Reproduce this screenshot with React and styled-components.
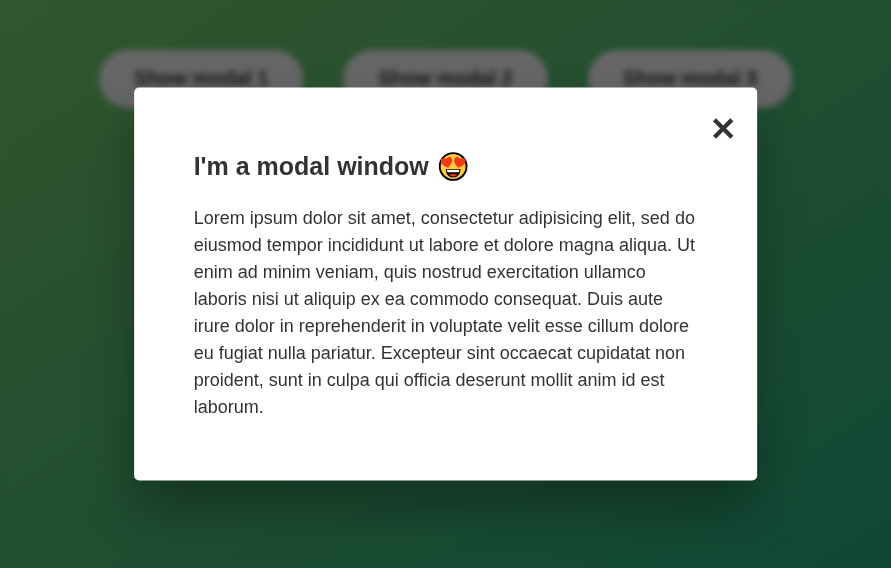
import React from 'react';
import styled, { createGlobalStyle } from 'styled-components';

const GlobalStyle = createGlobalStyle`
  * { margin: 0; padding: 0; box-sizing: border-box; }
  html { font-size: 62.5%; }
  body {
    font-family: "Liberation Sans", Arial, sans-serif;
    color: #333;
    line-height: 1.5;
    overflow: hidden;
  }
`;

const Page = styled.main`
  display: flex;
  justify-content: center;
  align-items: flex-start;
  height: 100vh;
  background: linear-gradient(to top left, #28b487, #7dd56f);
`;

const ShowButton = styled.button`
  font: 600 2rem "Liberation Sans", Arial, sans-serif;
  padding: 1.7rem 3.5rem 1.8rem;
  margin: 5rem 2rem;
  border: none;
  background-color: #fff;
  color: #444;
  border-radius: 10rem;
  white-space: nowrap;
`;

const Overlay = styled.div`
  position: fixed;
  inset: 0;
  background-color: rgba(0, 0, 0, 0.6);
  backdrop-filter: blur(3px);
`;

const Modal = styled.section`
  position: fixed;
  top: 50%;
  left: 50%;
  transform: translate(-50%, -50%);
  width: 70%;
  background-color: #fff;
  padding: 6rem;
  border-radius: 5px;
  box-shadow: 0 3rem 5rem rgba(0, 0, 0, 0.3);
`;

const CloseButton = styled.button`
  position: absolute;
  top: 3rem;
  right: 2.3rem;
  width: 22px;
  height: 22px;
  color: #333;
  border: none;
  background: none;

  svg {
    display: block;
  }
`;

const Title = styled.h1`
  display: flex;
  align-items: center;
  gap: 0.9rem;
  height: 3.7rem;
  font-size: 2.5rem;
  margin-bottom: 2rem;
`;

const TitleText = styled.span`
  padding-top: 1px;
`;

const Text = styled.p`
  font-size: 1.8rem;
`;

const Emoji = styled.svg`
  width: 30px;
  height: 30px;
`;

const HEART = 'M0 5 C-3 2.8 -5.6 .8 -5 -2.2 C-4.5 -4.9 -1.2 -5 0 -2.8 C1.2 -5 4.5 -4.9 5 -2.2 C5.6 .8 3 2.8 0 5Z';

const HeartEyes = () => (
  <Emoji viewBox="0 0 30 30" role="img" aria-label="Heart eyes">
    <circle cx="15" cy="15" r="13.4" fill="#ffc83d" stroke="#000" strokeWidth="1.9" />
    <path d={HEART} transform="translate(8.7 10.8) rotate(-12) scale(1.12)" fill="#f03a17" />
    <path d={HEART} transform="translate(21.3 10.8) rotate(12) scale(1.12)" fill="#f03a17" />
    <path d="M7.7 17.5H22.3C22.3 22.8 19.4 26 15 26S7.7 22.8 7.7 17.5Z" fill="#000" />
    <path d="M8.8 18.2H21.2C21.2 20 20.8 20.7 20 20.7H10C9.2 20.7 8.8 20 8.8 18.2Z" fill="#fff" />
    <path d="M10.7 23.3Q15 21.6 19.3 23.3Q17.6 25.1 15 25.1T10.7 23.3Z" fill="#e83a20" />
  </Emoji>
);

export default function App() {
  return (
    <>
      <GlobalStyle />
      <Page>
        {[1, 2, 3].map((n) => (
          <ShowButton key={n}>Show modal {n}</ShowButton>
        ))}
      </Page>
      <Overlay />
      <Modal>
        <CloseButton aria-label="Close">
          <svg width="22" height="22" viewBox="0 0 22 22">
            <path d="M2.3 2.3 19.7 19.7M19.7 2.3 2.3 19.7" stroke="currentColor" strokeWidth="4.3" />
          </svg>
        </CloseButton>
        <Title>
          <TitleText>I'm a modal window</TitleText>
          <HeartEyes />
        </Title>
        <Text>
          Lorem ipsum dolor sit amet, consectetur adipisicing elit, sed do
          eiusmod tempor incididunt ut labore et dolore magna aliqua. Ut enim
          ad minim veniam, quis nostrud exercitation ullamco laboris nisi ut
          aliquip ex ea commodo consequat. Duis aute irure dolor in
          reprehenderit in voluptate velit esse cillum dolore eu fugiat nulla
          pariatur. Excepteur sint occaecat cupidatat non proident, sunt in
          culpa qui officia deserunt mollit anim id est laborum.
        </Text>
      </Modal>
    </>
  );
}
